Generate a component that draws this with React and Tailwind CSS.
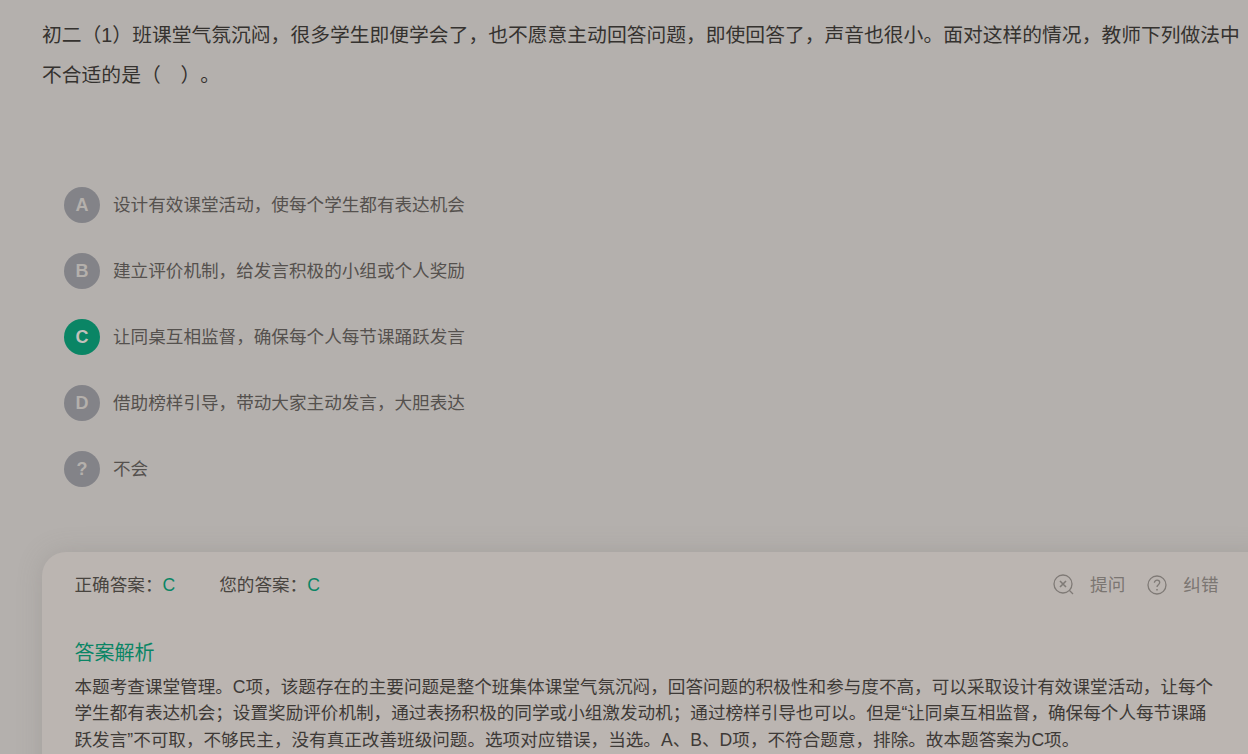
const options = [
  ["A", "设计有效课堂活动，使每个学生都有表达机会"],
  ["B", "建立评价机制，给发言积极的小组或个人奖励"],
  ["C", "让同桌互相监督，确保每个人每节课踊跃发言"],
  ["D", "借助榜样引导，带动大家主动发言，大胆表达"],
  ["?", "不会"],
];

export default function App() {
  return (
    <div className="h-[754px] w-[1248px] overflow-hidden bg-[#b4b0ad] pl-[42px] pt-[15px] text-[#35322f] [font-family:'Liberation_Sans','Noto_Sans_CJK_SC',sans-serif]">
      <p className="w-[1200px] text-[19.8px] leading-[40px] [text-spacing-trim:space-all]">
        初二（1）班课堂气氛沉闷，很多学生即便学会了，也不愿意主动回答问题，即使回答了，声音也很小。面对这样的情况，教师下列做法中不合适的是（　）。
      </p>
      <ul className="mt-[92px] flex flex-col gap-[30px] pl-[22px]">
        {options.map(([letter, text]) => (
          <li key={letter} className="flex h-[36px] items-center gap-[13px]">
            <span
              className={
                letter === "C"
                  ? "flex h-[36px] w-[36px] items-center justify-center rounded-full bg-[#0a8565] text-[18px] font-bold text-[#c4c0bc]"
                  : "flex h-[36px] w-[36px] items-center justify-center rounded-full bg-[#838388] text-[18px] font-bold text-[#b4b0ac]"
              }
            >
              {letter}
            </span>
            <span className="text-[17.6px] leading-[24px] text-[#55514e]">{text}</span>
          </li>
        ))}
      </ul>
      <section className="mt-[65px] h-[260px] w-[1240px] rounded-[24px] bg-[#bbb5b1] px-[32.5px] pt-[20px] shadow-[0_0_24px_rgba(120,115,110,0.25)]">
        <div className="flex h-[26px] w-[1144px] items-center justify-between text-[17.6px]">
          <div className="flex items-center gap-[44px] text-[#48443f]">
            <span>正确答案：<span className="text-[#0a8565]">C</span></span>
            <span>您的答案：<span className="text-[#0a8565]">C</span></span>
          </div>
          <div className="flex items-center text-[#7b7672]">
            <svg width="22" height="22" viewBox="0 0 22 22" fill="none" stroke="#7f7a76" strokeWidth="1.3" className="mr-[15px]">
              <circle cx="10" cy="10" r="9" />
              <path d="M7 7l6 6M13 7l-6 6" strokeWidth="1.6" />
              <path d="M16.5 16.5l3.5 3.5" />
            </svg>
            <span>提问</span>
            <svg width="20" height="20" viewBox="0 0 20 20" fill="none" stroke="#7f7a76" strokeWidth="1.3" className="ml-[22px] mr-[16px]">
              <circle cx="10" cy="10" r="9" />
              <path d="M7.4 7.8c0-1.6 1.2-2.6 2.7-2.6s2.6 1 2.6 2.3c0 2.2-2.7 2.2-2.7 4.5" />
              <path d="M10 14v1.4" strokeWidth="1.5" />
            </svg>
            <span>纠错</span>
          </div>
        </div>
        <h3 className="mt-[41px] text-[20px] font-normal leading-[28px] text-[#0a8565]">答案解析</h3>
        <p className="mt-[6.5px] w-[1145px] text-[17.6px] leading-[26.5px] text-[#3e3a37]">
          本题考查课堂管理。C项，该题存在的主要问题是整个班集体课堂气氛沉闷，回答问题的积极性和参与度不高，可以采取设计有效课堂活动，让每个学生都有表达机会；设置奖励评价机制，通过表扬积极的同学或小组激发动机；通过榜样引导也可以。但是“让同桌互相监督，确保每个人每节课踊跃发言”不可取，不够民主，没有真正改善班级问题。选项对应错误，当选。A、B、D项，不符合题意，排除。故本题答案为C项。
        </p>
      </section>
    </div>
  );
}
